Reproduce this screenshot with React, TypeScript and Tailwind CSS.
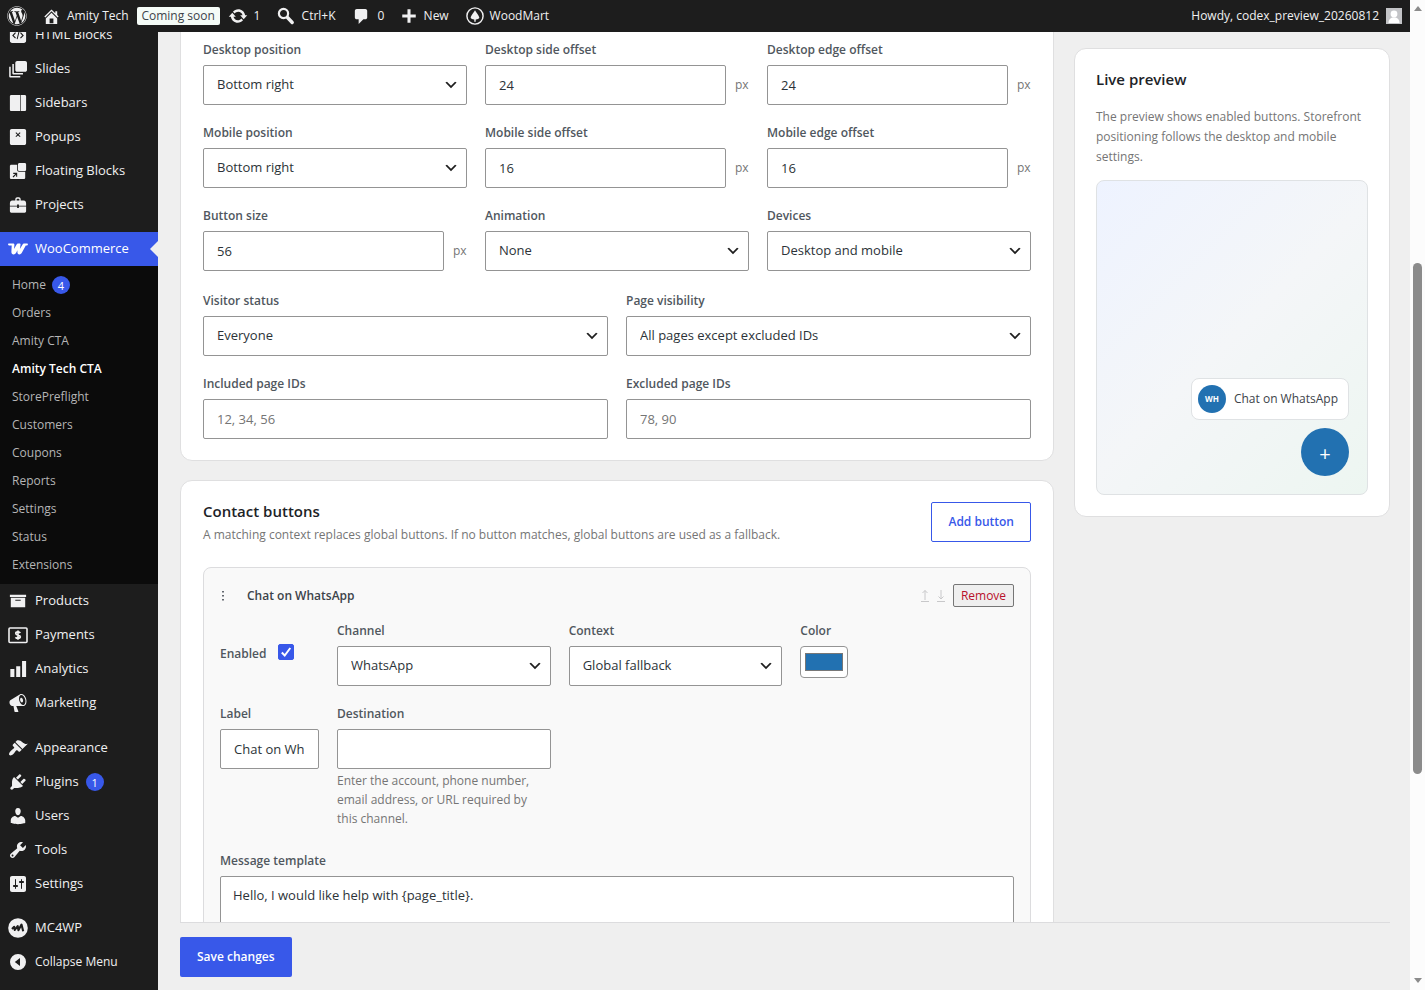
import React, { useState } from "react";
import { FaWordpress } from "react-icons/fa";

const paths = {
  home: "M16 8.5l1.53 1.53-1.06 1.06L10 4.6l-6.47 6.49-1.06-1.06L10 2.5l4 4v-2h2v4zm-6-2.46l6 5.99V18H4v-5.97zM12 17v-5H8v5h4z",
  update:
    "M10.2 3.28c3.53 0 6.43 2.61 6.92 6h2.08l-3.5 4-3.5-4h2.32c-.45-1.97-2.21-3.45-4.32-3.45-1.45 0-2.73.71-3.54 1.78L4.95 5.66C6.23 4.2 8.11 3.28 10.2 3.28zm-.4 13.44c-3.52 0-6.43-2.61-6.92-6H.8l3.5-4c1.17 1.33 2.33 2.67 3.5 4H5.48c.45 1.97 2.21 3.45 4.32 3.45 1.45 0 2.73-.71 3.54-1.78l1.71 1.95c-1.28 1.46-3.15 2.38-5.25 2.38z",
  comment:
    "M5 2h9c1.1 0 2 .9 2 2v7c0 1.1-.9 2-2 2h-2l-5 5v-5H5c-1.1 0-2-.9-2-2V4c0-1.1.9-2 2-2z",
  plus: "M17.5 8.3v3.4h-5.8v5.8H8.3v-5.8H2.5V8.3h5.8V2.5h3.4v5.8z",
  html: "M3.5 1h13C17.900 1 19 2.100 19 3.500v13c0 1.400-1.100 2.500-2.500 2.500h-13C2.100 19 1 17.900 1 16.500v-13C1 2.100 2.100 1 3.500 1zm3.300 6L3.500 10.500l3.300 3.500.9-.9-2.400-2.600L7.700 7.900zm6.400 0l-.9.9 2.400 2.600-2.400 2.600.9.9 3.300-3.500zm-2.700-.5l-2 8 1.100.3 2-8z",
  slides:
    "M9 1h9c1 0 2 1 2 2v8c0 1-1 2-2 2H9c-1 0-2-1-2-2V3c0-1 1-2 2-2zM3.700 4.500h1.700v10h10.100v1.700H5.200c-.8 0-1.500-.7-1.500-1.500zM.2 7.500h1.700v10.300h10.600v1.700H1.700c-.8 0-1.500-.7-1.500-1.500z",
  sidebars:
    "M2.500 1h9.800v18H2.500C1.700 19 1 18.300 1 17.500v-15C1 1.700 1.700 1 2.500 1zM13 1h4.500c.8 0 1.500.7 1.500 1.500v15c0 .8-.7 1.500-1.500 1.500H13z",
  popups:
    "M3 1h14c1.100 0 2 .9 2 2v14c0 1.100-.9 2-2 2H3c-1.100 0-2-.9-2-2V3c0-1.100.9-2 2-2zm5 3.700l-.8.8L9.200 7.400 7.200 9.300l.8.8L10 8.200l2 1.900.8-.8-2-1.900 2-1.900-.8-.8L10 6.600z",
  floating:
    "M11.500 1h6c.8 0 1.500.7 1.500 1.500v6c0 .8-.7 1.500-1.500 1.500h-6c-.8 0-1.500-.7-1.500-1.500v-6c0-.8.7-1.500 1.500-1.500zM2.500 3h6.600v6c0 1.100.9 1.900 1.900 1.900h7v6.600c0 .8-.7 1.500-1.500 1.500h-14C1.700 19 1 18.300 1 17.500v-13C1 3.700 1.700 3 2.500 3zm2.200 9v1.200H7l-3 3 .9.9 3-3v2.300h1.200V12z",
  portfolio:
    "M7 5V3.500C7 2.500 8 1.500 9 1.500h2c1 0 2 1 2 2V5h3.500c1.500 0 2.500 1.500 2.500 3v2.800h-8V9.500H9v1.300H1V8c0-1.500 1-3 2.500-3zm1.500 0h3V3.700c0-.4-.3-.7-.7-.7H9.200c-.4 0-.7.3-.7.7zM1 11.800h8v1.500h2v-1.500h8V17c0 .8-.7 1.500-1.500 1.500h-15C1.700 18.500 1 17.800 1 17z",
  archive: "M19 3v2.500H1V3h18zM2 6.500h16V17H2V6.500zm11 3.200V8.500H7v1.200h6z",
  chart: "M19 19V1h-4.500v18H19zm-6.500 0V7H8v12h4.500zm-6.500 0v-9H1.500v9H6z",
  megaphone:
    "M18.150 5.940c.46 1.620.38 3.220-.02 4.480-.42 1.280-1.260 2.180-2.300 2.480-.16.06-.26.06-.4.06-.06.02-.12.02-.18.02-.06.02-.14.02-.22.02h-6.800l2.220 5.500c.02.14-.06.26-.14.34-.08.1-.24.16-.34.16H6.950c-.1 0-.26-.06-.34-.16-.08-.08-.16-.2-.14-.34l-1-5.500H4.250l-.02-.02c-.5.06-1.080-.18-1.540-.62s-.88-1.080-1.060-1.880c-.24-.8-.2-1.560-.02-2.200.18-.62.58-1.080 1.060-1.300l.02-.02 9-5.400c.1-.06.18-.1.24-.16.06-.04.14-.08.24-.12.16-.08.28-.12.5-.18 1.040-.3 2.240.1 3.220.98s1.840 2.240 2.260 3.860zm-2.580 5.980h-.02c.4-.1.74-.34 1.040-.7.58-.7.86-1.760.86-3.040 0-.64-.1-1.300-.28-1.980-.34-1.360-1.020-2.500-1.780-3.240s-1.680-1.100-2.460-.88c-.82.22-1.400.96-1.700 2-.32 1.040-.28 2.360.06 3.720.38 1.360 1 2.500 1.800 3.240.78.74 1.620 1.100 2.480.88zm-2.540-7.080c.22-.04.42-.02.62.04.38.16.76.48 1.020 1s.42 1.200.42 1.780c0 .3-.04.56-.12.8-.18.48-.44.84-.86.94-.34.1-.8-.06-1.140-.4s-.64-.86-.78-1.500c-.18-.62-.12-1.240.02-1.720s.48-.84.82-.94z",
  appearance:
    "M14.480 11.060L7.410 3.990l1.500-1.500c.5-.56 2.300-.47 3.510.32 1.210.8 1.430 1.280 2.910 2.100 1.180.64 2.450 1.260 4.450.85zm-.71.71L6.700 4.700 4.930 6.470c-.39.39-.39 1.020 0 1.410l1.060 1.060c.39.39.39 1.030 0 1.420-.6.6-1.430 1.110-2.210 1.690-.35.26-.7.53-1.010.84C1.430 14.230.4 16.080 1.400 17.070c.99 1 2.840-.03 4.180-1.360.31-.31.58-.66.85-1.020.57-.78 1.080-1.610 1.690-2.210.39-.39 1.020-.39 1.410 0l1.060 1.060c.39.39 1.020.39 1.410 0z",
  plugins:
    "M13.110 4.360L9.870 7.600 8 5.730l3.240-3.240c.35-.34 1.050-.2 1.560.32.52.51.66 1.210.31 1.550zm-8 1.770l.91-1.120 9.010 9.010-1.190.84c-.71.71-2.630 1.160-3.820 1.160H6.140L4.900 17.260c-.59.59-1.540.59-2.120 0-.59-.58-.59-1.530 0-2.120l1.240-1.240v-3.880c0-1.130.4-3.190 1.090-3.890zm7.260 3.970l3.240-3.240c.34-.35 1.040-.21 1.550.31.52.51.66 1.210.31 1.550l-3.240 3.250z",
  users:
    "M10 9.250c-2.270 0-2.730-3.440-2.730-3.440C7 4.020 7.820 2 9.970 2c2.160 0 2.980 2.020 2.710 3.810 0 0-.41 3.440-2.680 3.440zm0 2.570L12.720 10c2.390 0 4.520 2.330 4.520 4.530v2.490s-3.650 1.130-7.240 1.130c-3.650 0-7.240-1.130-7.240-1.130v-2.490c0-2.250 1.940-4.480 4.470-4.480z",
  tools:
    "M16.680 9.770c-1.340 1.340-3.300 1.670-4.950.99l-5.410 6.520c-.99.99-2.590.99-3.580 0s-.99-2.590 0-3.570l6.520-5.420c-.68-1.650-.35-3.610.99-4.950 1.280-1.280 3.120-1.620 4.720-1.060l-2.890 2.890 2.820 2.820 2.860-2.870c.53 1.580.18 3.390-1.080 4.650zM3.810 16.210c.4.39 1.040.39 1.430 0 .4-.4.4-1.040 0-1.430-.39-.4-1.030-.4-1.430 0-.39.39-.39 1.030 0 1.430z",
  settings:
    "M18 16V4c0-1.100-.9-2-2-2H4c-1.100 0-2 .9-2 2v12c0 1.100.9 2 2 2h12c1.100 0 2-.9 2-2zM8 11h1c.55 0 1 .45 1 1s-.45 1-1 1H8v1.500c0 .28-.22.5-.5.5s-.5-.22-.5-.5V13H6c-.55 0-1-.45-1-1s.45-1 1-1h1V5.500c0-.28.22-.5.5-.5s.5.22.5.5V11zm5-2h-1c-.55 0-1-.45-1-1s.45-1 1-1h1V5.500c0-.28.22-.5.5-.5s.5.22.5.5V7h1c.55 0 1 .45 1 1s-.45 1-1 1h-1v5.500c0 .28-.22.5-.5.5s-.5-.22-.5-.5V9z",
  collapse:
    "M10 2a8 8 0 1 0 0 16 8 8 0 0 0 0-16zM12 6v8L6.800 10z",
  chevron: "M5 6l5 5 5-5 2 1-7 7-7-7 2-1z",
};

type IconName = keyof typeof paths;

function Icon({ name, className = "size-5" }: { name: IconName; className?: string }) {
  return (
    <svg
      viewBox="0 0 20 20"
      fill="currentColor"
      fillRule="evenodd"
      aria-hidden="true"
      className={`shrink-0 ${className}`}
    >
      <path d={paths[name]} />
    </svg>
  );
}

function SearchIcon() {
  return (
    <svg viewBox="0 0 20 20" fill="none" stroke="currentColor" aria-hidden="true" className="size-5 shrink-0">
      <circle cx="7.500" cy="7.500" r="4.600" strokeWidth="2.200" />
      <path d="M11.500 11.500l4.700 5" strokeWidth="3.400" strokeLinecap="round" />
    </svg>
  );
}

function WooLogo() {
  return (
    <svg viewBox="0 0 20 20" fill="currentColor" aria-hidden="true" className="size-5 shrink-0">
      <path d="M.6 4.500h4.300c1.100 0 1.600.6 1.500 1.700l-.4 3.900 2.600-4.700c.4-.7.900-.9 1.700-.9h1.200c.8 0 1.100.5 1 1.200l-.6 4.200 2.700-4.500c.4-.7.900-.9 1.700-.9h2.900c.7 0 .9.500.6 1.200-.3.600-.8.900-1.500.9h-.5l-3.700 6.700c-.7 1.300-1.500 2.100-2.700 2.100-1.500 0-2.100-1-2-2.700l.1-1.500-1.100 2.100c-.7 1.300-1.500 2.100-2.800 2.100-1.500 0-2.300-.9-2.200-2.700l.3-6.100H1.600C.8 6.600.2 6.200.1 5.500 0 4.900.2 4.500.6 4.500z" />
    </svg>
  );
}

function PaymentsIcon() {
  return (
    <svg viewBox="0 0 20 20" fill="none" stroke="currentColor" aria-hidden="true" className="size-5 shrink-0">
      <rect x="1" y="3" width="18" height="14.500" rx="1" strokeWidth="1.600" />
      <path
        d="M12.300 8c-.5-.8-1.300-1.100-2.300-1.100-1.300 0-2.200.6-2.200 1.500 0 2.300 4.500 1.100 4.500 3.400 0 1-.9 1.600-2.300 1.600-1.100 0-2-.4-2.500-1.200M10 5.500v9.300"
        strokeWidth="1.700"
      />
    </svg>
  );
}

function McIcon() {
  return (
    <svg viewBox="0 0 20 20" aria-hidden="true" className="size-5 shrink-0">
      <circle cx="10" cy="10" r="9.800" fill="currentColor" />
      <path
        d="M4 11l2.200-2.200.6 3.200 2.900-4 .7 4.200 3.100-5.600 1.700 6.600"
        fill="none"
        stroke="#1d1d1d"
        strokeWidth="2.100"
        strokeLinejoin="round"
      />
    </svg>
  );
}

function WoodMartIcon() {
  return (
    <svg viewBox="0 0 20 20" aria-hidden="true" className="size-[18px] shrink-0">
      <circle cx="10" cy="10" r="9" fill="none" stroke="currentColor" strokeWidth="1.600" />
      <path
        d="M10 3.500c1.600 2.900 4.800 6.300 4.800 8.300 0 1.300-1.500 2-4 2.100v2.600H9.200v-2.600c-2.500-.1-4-.8-4-2.100 0-2 3.200-5.400 4.800-8.300z"
        fill="currentColor"
      />
    </svg>
  );
}

function AdminBar() {
  return (
    <header className="flex h-8 shrink-0 items-center bg-[#1d1d1d] pl-[7px] pr-2 text-[12px] text-[#f0f0f1]">
      <a href="#about" aria-label="About WordPress">
        <FaWordpress className="size-5" />
      </a>
      <a href="#site" className="ml-[15px] flex items-center gap-[6px]">
        <Icon name="home" className="size-[19px]" />
        Amity Tech
      </a>
      <a
        href="#visibility"
        className="ml-2 flex h-[18px] w-[83px] items-center justify-center rounded-xs bg-[#f4fbf7] font-medium text-[#3c434a]"
      >
        Coming soon
      </a>
      <a href="#updates" className="ml-2 flex w-12 items-center gap-[6px]">
        <Icon name="update" className="size-5" />1
      </a>
      <button type="button" className="flex w-[76px] items-center gap-[6px]">
        <SearchIcon />
        Ctrl+K
      </button>
      <a href="#comments" className="flex w-12 items-center gap-[7px]">
        <Icon name="comment" className="size-[19px]" />0
      </a>
      <a href="#new" className="flex w-[66px] items-center gap-[6px]">
        <Icon name="plus" className="size-[18px]" />
        New
      </a>
      <a href="#woodmart" className="flex items-center gap-[6px]">
        <WoodMartIcon />
        WoodMart
      </a>
      <a href="#profile" className="ml-auto flex items-center gap-[7px]">
        Howdy, codex_preview_20260812
        <svg viewBox="0 0 16 16" aria-hidden="true" className="size-4">
          <rect width="16" height="16" fill="#c3c4c7" />
          <circle cx="8" cy="6" r="3.400" fill="#fff" />
          <path d="M2.500 15c0-3.500 2-5.500 5.500-5.500s5.500 2 5.500 5.500z" fill="#fff" />
        </svg>
      </a>
    </header>
  );
}

function Badge({ children }: { children: React.ReactNode }) {
  return (
    <span className="flex size-[18px] items-center justify-center rounded-full bg-[#3858e9] text-[11px] leading-none text-white">
      {children}
    </span>
  );
}

function MenuItem({
  icon,
  label,
  badge,
  active,
}: {
  icon: React.ReactNode;
  label: string;
  badge?: string;
  active?: boolean;
}) {
  return (
    <li>
      <a
        href="#menu"
        className={`relative flex h-[34px] items-center pl-2 text-[13px] ${
          active ? "bg-[#3858e9] text-white" : "text-[#f0f0f1]"
        }`}
      >
        {icon}
        <span className="ml-[7px] mr-[7px]">{label}</span>
        {badge && <Badge>{badge}</Badge>}
        {active && (
          <span className="absolute right-0 top-[9px] border-y-8 border-r-8 border-y-transparent border-r-[#efefef]" />
        )}
      </a>
    </li>
  );
}

const wooPages = [
  "Home",
  "Orders",
  "Amity CTA",
  "Amity Tech CTA",
  "StorePreflight",
  "Customers",
  "Coupons",
  "Reports",
  "Settings",
  "Status",
  "Extensions",
];

function Sidebar() {
  const small = "size-[18px] mx-px";
  return (
    <nav aria-label="Main menu" className="w-[158px] shrink-0 overflow-hidden bg-[#1d1d1d]">
      <ul className="-mt-[14px]">
        <MenuItem icon={<Icon name="html" className={small} />} label="HTML Blocks" />
        <MenuItem icon={<Icon name="slides" className={small} />} label="Slides" />
        <MenuItem icon={<Icon name="sidebars" className={small} />} label="Sidebars" />
        <MenuItem icon={<Icon name="popups" className={small} />} label="Popups" />
        <MenuItem icon={<Icon name="floating" className={small} />} label="Floating Blocks" />
        <MenuItem icon={<Icon name="portfolio" className={small} />} label="Projects" />
        <li className="h-[10px]" />
        <MenuItem icon={<WooLogo />} label="WooCommerce" active />
        <li>
          <ul className="bg-[#0b0b0b] py-[5px]">
            {wooPages.map((page) => (
              <li key={page}>
                <a
                  href="#page"
                  className={`flex h-7 items-center gap-[6px] pl-3 text-[12px] ${
                    page === "Amity Tech CTA" ? "font-semibold text-white" : "text-[#b5b5b6]"
                  }`}
                >
                  {page}
                  {page === "Home" && <Badge>4</Badge>}
                </a>
              </li>
            ))}
          </ul>
        </li>
        <MenuItem icon={<Icon name="archive" className={small} />} label="Products" />
        <MenuItem icon={<PaymentsIcon />} label="Payments" />
        <MenuItem icon={<Icon name="chart" className={small} />} label="Analytics" />
        <MenuItem icon={<Icon name="megaphone" />} label="Marketing" />
        <li className="h-[11px]" />
        <MenuItem icon={<Icon name="appearance" />} label="Appearance" />
        <MenuItem icon={<Icon name="plugins" />} label="Plugins" badge="1" />
        <MenuItem icon={<Icon name="users" />} label="Users" />
        <MenuItem icon={<Icon name="tools" />} label="Tools" />
        <MenuItem icon={<Icon name="settings" />} label="Settings" />
        <li className="h-[10px]" />
        <MenuItem icon={<McIcon />} label="MC4WP" />
        <li>
          <button type="button" className="flex h-[34px] items-center gap-[7px] pl-2 text-[12px] text-[#f0f0f1]">
            <Icon name="collapse" />
            Collapse Menu
          </button>
        </li>
      </ul>
    </nav>
  );
}

const controlClass =
  "h-10 w-full min-w-0 rounded-xs border border-[#949494] bg-white pl-[13px] pr-[14px] text-[13px] text-[#2c3338] placeholder:text-[#757575]";

function Field({
  id,
  label,
  children,
}: {
  id: string;
  label: string;
  children: React.ReactNode;
}) {
  return (
    <div className="min-w-0">
      <label htmlFor={id} className="mb-[5px] block text-[12px] leading-5 font-semibold text-[#50575e]">
        {label}
      </label>
      {children}
    </div>
  );
}

function SelectField({ id, label, value }: { id: string; label: string; value: string }) {
  return (
    <Field id={id} label={label}>
      <div className="relative">
        <select id={id} className={`${controlClass} appearance-none`}>
          <option>{value}</option>
        </select>
        <Icon
          name="chevron"
          className="pointer-events-none absolute right-2 top-3 size-4 text-[#1e1e1e]"
        />
      </div>
    </Field>
  );
}

function PixelField({ id, label, value }: { id: string; label: string; value: string }) {
  return (
    <Field id={id} label={label}>
      <div className="flex items-center gap-[9px]">
        <input id={id} type="number" defaultValue={value} className={controlClass} />
        <span className="w-[14px] shrink-0 text-[12px] text-[#757575]">px</span>
      </div>
    </Field>
  );
}

function TextField({
  id,
  label,
  value,
  placeholder,
}: {
  id: string;
  label: string;
  value?: string;
  placeholder?: string;
}) {
  return (
    <Field id={id} label={label}>
      <input
        id={id}
        type="text"
        defaultValue={value}
        placeholder={placeholder}
        className={controlClass}
      />
    </Field>
  );
}

function DisplaySettings() {
  return (
    <section className="rounded-xl border border-[#dfdfe0] bg-white px-[22px] pt-[27px] pb-[21px]">
      <div className="grid grid-cols-3 gap-[18px]">
        <SelectField id="desktop-position" label="Desktop position" value="Bottom right" />
        <PixelField id="desktop-side" label="Desktop side offset" value="24" />
        <PixelField id="desktop-edge" label="Desktop edge offset" value="24" />
        <SelectField id="mobile-position" label="Mobile position" value="Bottom right" />
        <PixelField id="mobile-side" label="Mobile side offset" value="16" />
        <PixelField id="mobile-edge" label="Mobile edge offset" value="16" />
        <PixelField id="button-size" label="Button size" value="56" />
        <SelectField id="animation" label="Animation" value="None" />
        <SelectField id="devices" label="Devices" value="Desktop and mobile" />
      </div>
      <div className="mt-5 grid grid-cols-2 gap-[18px]">
        <SelectField id="visitor-status" label="Visitor status" value="Everyone" />
        <SelectField id="page-visibility" label="Page visibility" value="All pages except excluded IDs" />
        <TextField id="included-ids" label="Included page IDs" placeholder="12, 34, 56" />
        <TextField id="excluded-ids" label="Excluded page IDs" placeholder="78, 90" />
      </div>
    </section>
  );
}

function MoveButton({ down }: { down?: boolean }) {
  return (
    <button type="button" disabled aria-label={down ? "Move down" : "Move up"} className="text-[#c8c8ca]">
      <svg viewBox="0 0 8 13" fill="none" stroke="currentColor" className="h-[13px] w-2">
        <path d={down ? "M4 1v9M1.500 7.500L4 10l2.500-2.500M0 12.500h8" : "M4 11V1.500M1.500 4L4 1.500 6.500 4M0 12.500h8"} />
      </svg>
    </button>
  );
}

function ContactButton() {
  const [enabled, setEnabled] = useState(true);
  const [color, setColor] = useState("#2271b1");

  return (
    <div className="mt-[22px] rounded-lg border border-[#dcdcde] bg-[#f9f9f9] p-4">
      <div className="flex h-[23px] items-center">
        <svg viewBox="0 0 4 12" fill="#646970" className="h-3 w-[6px]" aria-hidden="true">
          <rect x="1" y="1" width="2" height="1.500" />
          <rect x="1" y="5" width="2" height="1.500" />
          <rect x="1" y="9" width="2" height="1.500" />
        </svg>
        <h3 className="ml-[21px] text-[12px] font-semibold text-[#3c434a]">Chat on WhatsApp</h3>
        <div className="ml-auto flex items-center gap-2">
          <MoveButton />
          <MoveButton down />
          <button
            type="button"
            className="h-[23px] w-[61px] rounded-xs border border-[#767676] bg-[#efefef] text-[12px] text-[#b8102a]"
          >
            Remove
          </button>
        </div>
      </div>

      <div className="mt-[14px] grid grid-cols-[99px_repeat(3,minmax(0,1fr))] gap-[18px]">
        <div className="flex items-center gap-3">
          <label htmlFor="enabled" className="text-[12px] font-semibold text-[#50575e]">
            Enabled
          </label>
          <span className="relative mb-1 flex size-4">
            <input
              id="enabled"
              type="checkbox"
              checked={enabled}
              onChange={(e) => setEnabled(e.target.checked)}
              className="peer size-4 appearance-none rounded-xs border border-[#949494] bg-white checked:border-[#3858e9] checked:bg-[#3858e9]"
            />
            <svg
              viewBox="0 0 16 16"
              fill="none"
              stroke="#fff"
              strokeWidth="2"
              className="pointer-events-none absolute inset-0 hidden peer-checked:block"
            >
              <path d="M3.800 8.500l2.900 3L12.300 4" />
            </svg>
          </span>
        </div>
        <SelectField id="channel" label="Channel" value="WhatsApp" />
        <SelectField id="context" label="Context" value="Global fallback" />
        <Field id="color" label="Color">
          <input
            id="color"
            type="color"
            value={color}
            onChange={(e) => setColor(e.target.value)}
            className="block h-8 w-12 rounded-sm border border-[#949494] bg-white px-1 py-[6px] [&::-webkit-color-swatch-wrapper]:p-0 [&::-webkit-color-swatch]:border-[#777777]"
          />
        </Field>

        <TextField id="label" label="Label" value="Chat on WhatsApp" />
        <div className="min-w-0">
          <TextField id="destination" label="Destination" />
          <p className="mt-[2px] mb-[5px] pr-4 text-[12px] leading-[19px] text-[#757575]">
            Enter the account, phone number, email address, or URL required by this channel.
          </p>
        </div>
      </div>

      <div className="mt-[18px]">
        <Field id="message" label="Message template">
          <textarea
            id="message"
            rows={4}
            defaultValue="Hello, I would like help with {page_title}."
            className="block w-full rounded-xs border border-[#949494] bg-white px-3 py-2 text-[13px] leading-5 text-[#2c3338]"
          />
        </Field>
      </div>
    </div>
  );
}

function LivePreview() {
  return (
    <aside className="mt-4 self-start rounded-xl border border-[#dfdfe0] bg-white px-[21px] py-[21px]">
      <h2 className="text-[15px] leading-[18px] font-semibold text-[#1d2327]">Live preview</h2>
      <p className="mt-[19px] text-[12px] leading-5 text-[#757575]">
        The preview shows enabled buttons. Storefront positioning follows the desktop and mobile
        settings.
      </p>
      <div className="mt-[13px] flex h-[315px] flex-col items-end justify-end gap-2 rounded-lg border border-[#dfe2e4] bg-linear-135 from-[#eef3ff] via-[#f4f6f8] to-[#edf6f1] p-[18px]">
        <div className="flex h-[42px] items-center gap-2 rounded-lg border border-[#dfe2e4] bg-white px-[6px] pr-[10px] text-[12px] text-[#3c434a]">
          <span className="flex size-7 items-center justify-center rounded-full bg-[#2271b1] text-[8px] font-bold text-white">
            WH
          </span>
          Chat on WhatsApp
        </div>
        <button
          type="button"
          className="flex size-12 items-center justify-center rounded-full bg-[#2271b1] pt-1 text-[20px] leading-none text-white"
        >
          +
        </button>
      </div>
    </aside>
  );
}

function ScrollTrack() {
  return (
    <div className="flex w-[15px] shrink-0 flex-col items-center bg-[#fcfcfc]">
      <span className="mt-[6px] border-x-4 border-b-5 border-x-transparent border-b-[#8b8b8b]" />
      <span className="grow-252" />
      <span className="w-[9px] grow-510 rounded-full bg-[#8b8b8b]" />
      <span className="grow-204" />
      <span className="mb-[7px] border-x-4 border-t-5 border-x-transparent border-t-[#8b8b8b]" />
    </div>
  );
}

function App() {
  return (
    <div className="flex h-screen overflow-hidden font-['Open_Sans','Noto_Sans',sans-serif]">
      <div className="flex min-w-0 flex-1 flex-col bg-[#efefef]">
        <AdminBar />
        <div className="flex min-h-0 flex-1">
          <Sidebar />
          <main className="flex min-w-0 flex-1 flex-col pl-[22px] pr-5">
            <div className="grid min-h-0 flex-1 grid-cols-[minmax(0,1fr)_316px] gap-5 overflow-hidden">
              {/* settings column is scrolled a little under the admin bar */}
              <div className="-mt-5">
                <DisplaySettings />
                <section className="mt-[19px] rounded-xl border border-[#dfdfe0] bg-white px-[22px] py-[21px]">
                  <div className="flex items-start justify-between">
                    <div>
                      <h2 className="text-[15px] leading-[18px] font-semibold text-[#1d2327]">
                        Contact buttons
                      </h2>
                      <p className="mt-[5px] text-[12px] leading-5 text-[#757575]">
                        A matching context replaces global buttons. If no button matches, global
                        buttons are used as a fallback.
                      </p>
                    </div>
                    <button
                      type="button"
                      className="h-10 shrink-0 rounded-xs border border-[#3858e9] bg-white px-4 text-[12px] font-semibold text-[#3858e9]"
                    >
                      Add button
                    </button>
                  </div>
                  <ContactButton />
                </section>
              </div>
              <LivePreview />
            </div>
            <div className="shrink-0 border-t border-[#dcdcde] pt-[14px] pb-[13px]">
              <button
                type="submit"
                className="h-10 rounded-xs bg-[#3858e9] px-[17px] text-[12px] font-semibold text-white"
              >
                Save changes
              </button>
            </div>
          </main>
        </div>
      </div>
      <ScrollTrack />
    </div>
  );
}

export default App;
